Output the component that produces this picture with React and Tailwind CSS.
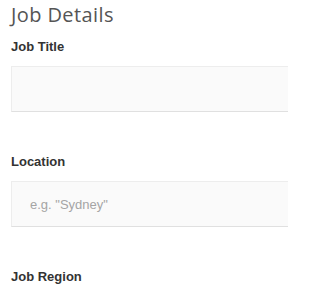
const Field = ({ label, placeholder }) => {
  return (
    <div className="flex flex-col">
      <label className="text-[13px] leading-[16px] font-bold text-[#333]">{label}</label>
      <input
        placeholder={placeholder}
        type="text"
        className="mt-[11px] h-[46px] w-[320px] border border-[#ededed] border-b-[#e0e0e0] bg-[#fafafa] px-[18px] text-[13px] text-[#555] placeholder:text-[#a5a5a5] outline-none"
      />
    </div>
  );
};

const App = () => {
  return (
    <div className="w-[288px] h-[288px] overflow-hidden bg-white pl-[11px] font-['Liberation_Sans',Arial,sans-serif]">
      <h1 className="pt-[2px] text-[20px] leading-[25px] font-normal text-[#555] tracking-[0.4px] font-['Open_Sans','Lato',sans-serif]">
        Job Details
      </h1>
      <div className="mt-[12px] flex flex-col gap-[42px]">
        <Field label="Job Title" placeholder="" />
        <Field label="Location" placeholder='e.g. "Sydney"' />
        <label className="text-[13px] leading-[16px] font-bold text-[#333]">Job Region</label>
      </div>
    </div>
  );
};

export default App;
